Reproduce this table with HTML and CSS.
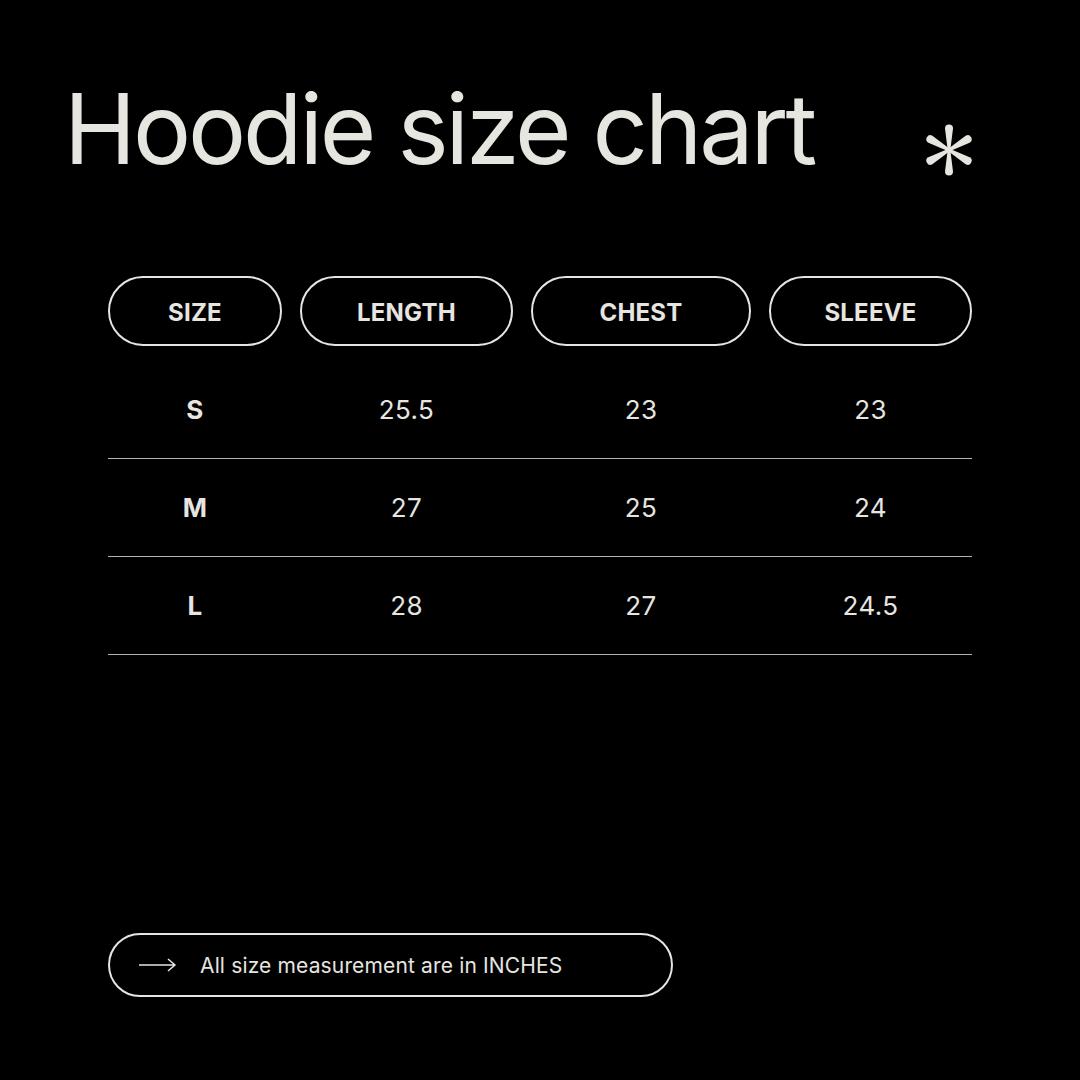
FILE: index.html
```html
<!DOCTYPE html>
<html>
<head>
<meta charset="utf-8">
<link rel="stylesheet" href="styles.css">
</head>
<body>
<div class="page">
  <header class="top">
    <h1 class="title">Hoodie size chart</h1>
    <svg class="star" width="60" height="60" viewBox="-30 -30 60 60">
      <g fill="#e6e5e0">
        <path id="petal" d="M -1.3 0 L -4 -21.5 A 4 4 0 0 1 4 -21.5 L 1.3 0 Z"/>
        <use href="#petal" transform="rotate(60)"/>
        <use href="#petal" transform="rotate(120)"/>
        <use href="#petal" transform="rotate(180)"/>
        <use href="#petal" transform="rotate(240)"/>
        <use href="#petal" transform="rotate(300)"/>
      </g>
    </svg>
  </header>

  <section class="chart">
    <div class="heads">
      <div class="pill">SIZE</div>
      <div class="pill">LENGTH</div>
      <div class="pill">CHEST</div>
      <div class="pill">SLEEVE</div>
    </div>
    <div class="row">
      <div class="cell size">S</div>
      <div class="cell">25.5</div>
      <div class="cell">23</div>
      <div class="cell">23</div>
    </div>
    <div class="row">
      <div class="cell size">M</div>
      <div class="cell">27</div>
      <div class="cell">25</div>
      <div class="cell">24</div>
    </div>
    <div class="row">
      <div class="cell size">L</div>
      <div class="cell">28</div>
      <div class="cell">27</div>
      <div class="cell">24.5</div>
    </div>
  </section>

  <div class="note">
    <svg class="arrow" width="38" height="14" viewBox="0 0 38 14">
      <path d="M0 7 H36 M29 1 L36 7 L29 13" fill="none" stroke="#e6e5e0" stroke-width="1.6" stroke-linejoin="round"/>
    </svg>
    <span>All size measurement are in INCHES</span>
  </div>
</div>
</body>
</html>
```

FILE: styles.css
```css
* { box-sizing: border-box; }
html, body {
  margin: 0;
  padding: 0;
  background: #000;
}
body {
  width: 1080px;
  height: 1080px;
  color: #e6e5e0;
  font-family: Inter, "Noto Sans", sans-serif;
}
.page {
  width: 1080px;
  height: 1080px;
  padding: 0 108px;
  display: flex;
  flex-direction: column;
}
.top {
  display: flex;
  justify-content: space-between;
  align-items: flex-start;
  width: 915px;
  margin-left: -44px;
  padding-top: 71px;
  height: 276px;
}
.title {
  margin: 0;
  font-size: 97px;
  font-weight: 400;
  line-height: 1.2;
  letter-spacing: -3.1px;
  white-space: nowrap;
  color: #e6e5e0;
}
.star {
  flex: none;
  margin-top: 49px;
}
.chart {
  display: flex;
  flex-direction: column;
}
.heads, .row {
  display: grid;
  grid-template-columns: 174px 213px 220px 203px;
  column-gap: 18px;
}
.heads { margin-bottom: 15px; }
.pill {
  height: 70px;
  border: 2px solid #e6e5e0;
  border-radius: 35px;
  display: flex;
  align-items: center;
  justify-content: center;
  font-weight: 700;
  font-size: 24px;
  letter-spacing: 0.2px;
  padding-top: 2px;
}
.row {
  height: 98px;
  border-bottom: 1px solid #b5b4b0;
  align-items: center;
}
.cell {
  text-align: center;
  font-size: 26px;
  font-weight: 400;
  letter-spacing: 0.4px;
}
.cell.size { font-weight: 700; }
.note {
  margin-top: auto;
  margin-bottom: 83px;
  width: 565px;
  height: 64px;
  border: 2px solid #e6e5e0;
  border-radius: 32px;
  display: flex;
  align-items: center;
  padding-left: 29px;
  gap: 23px;
  font-size: 21px;
  letter-spacing: 0.15px;
}
```
